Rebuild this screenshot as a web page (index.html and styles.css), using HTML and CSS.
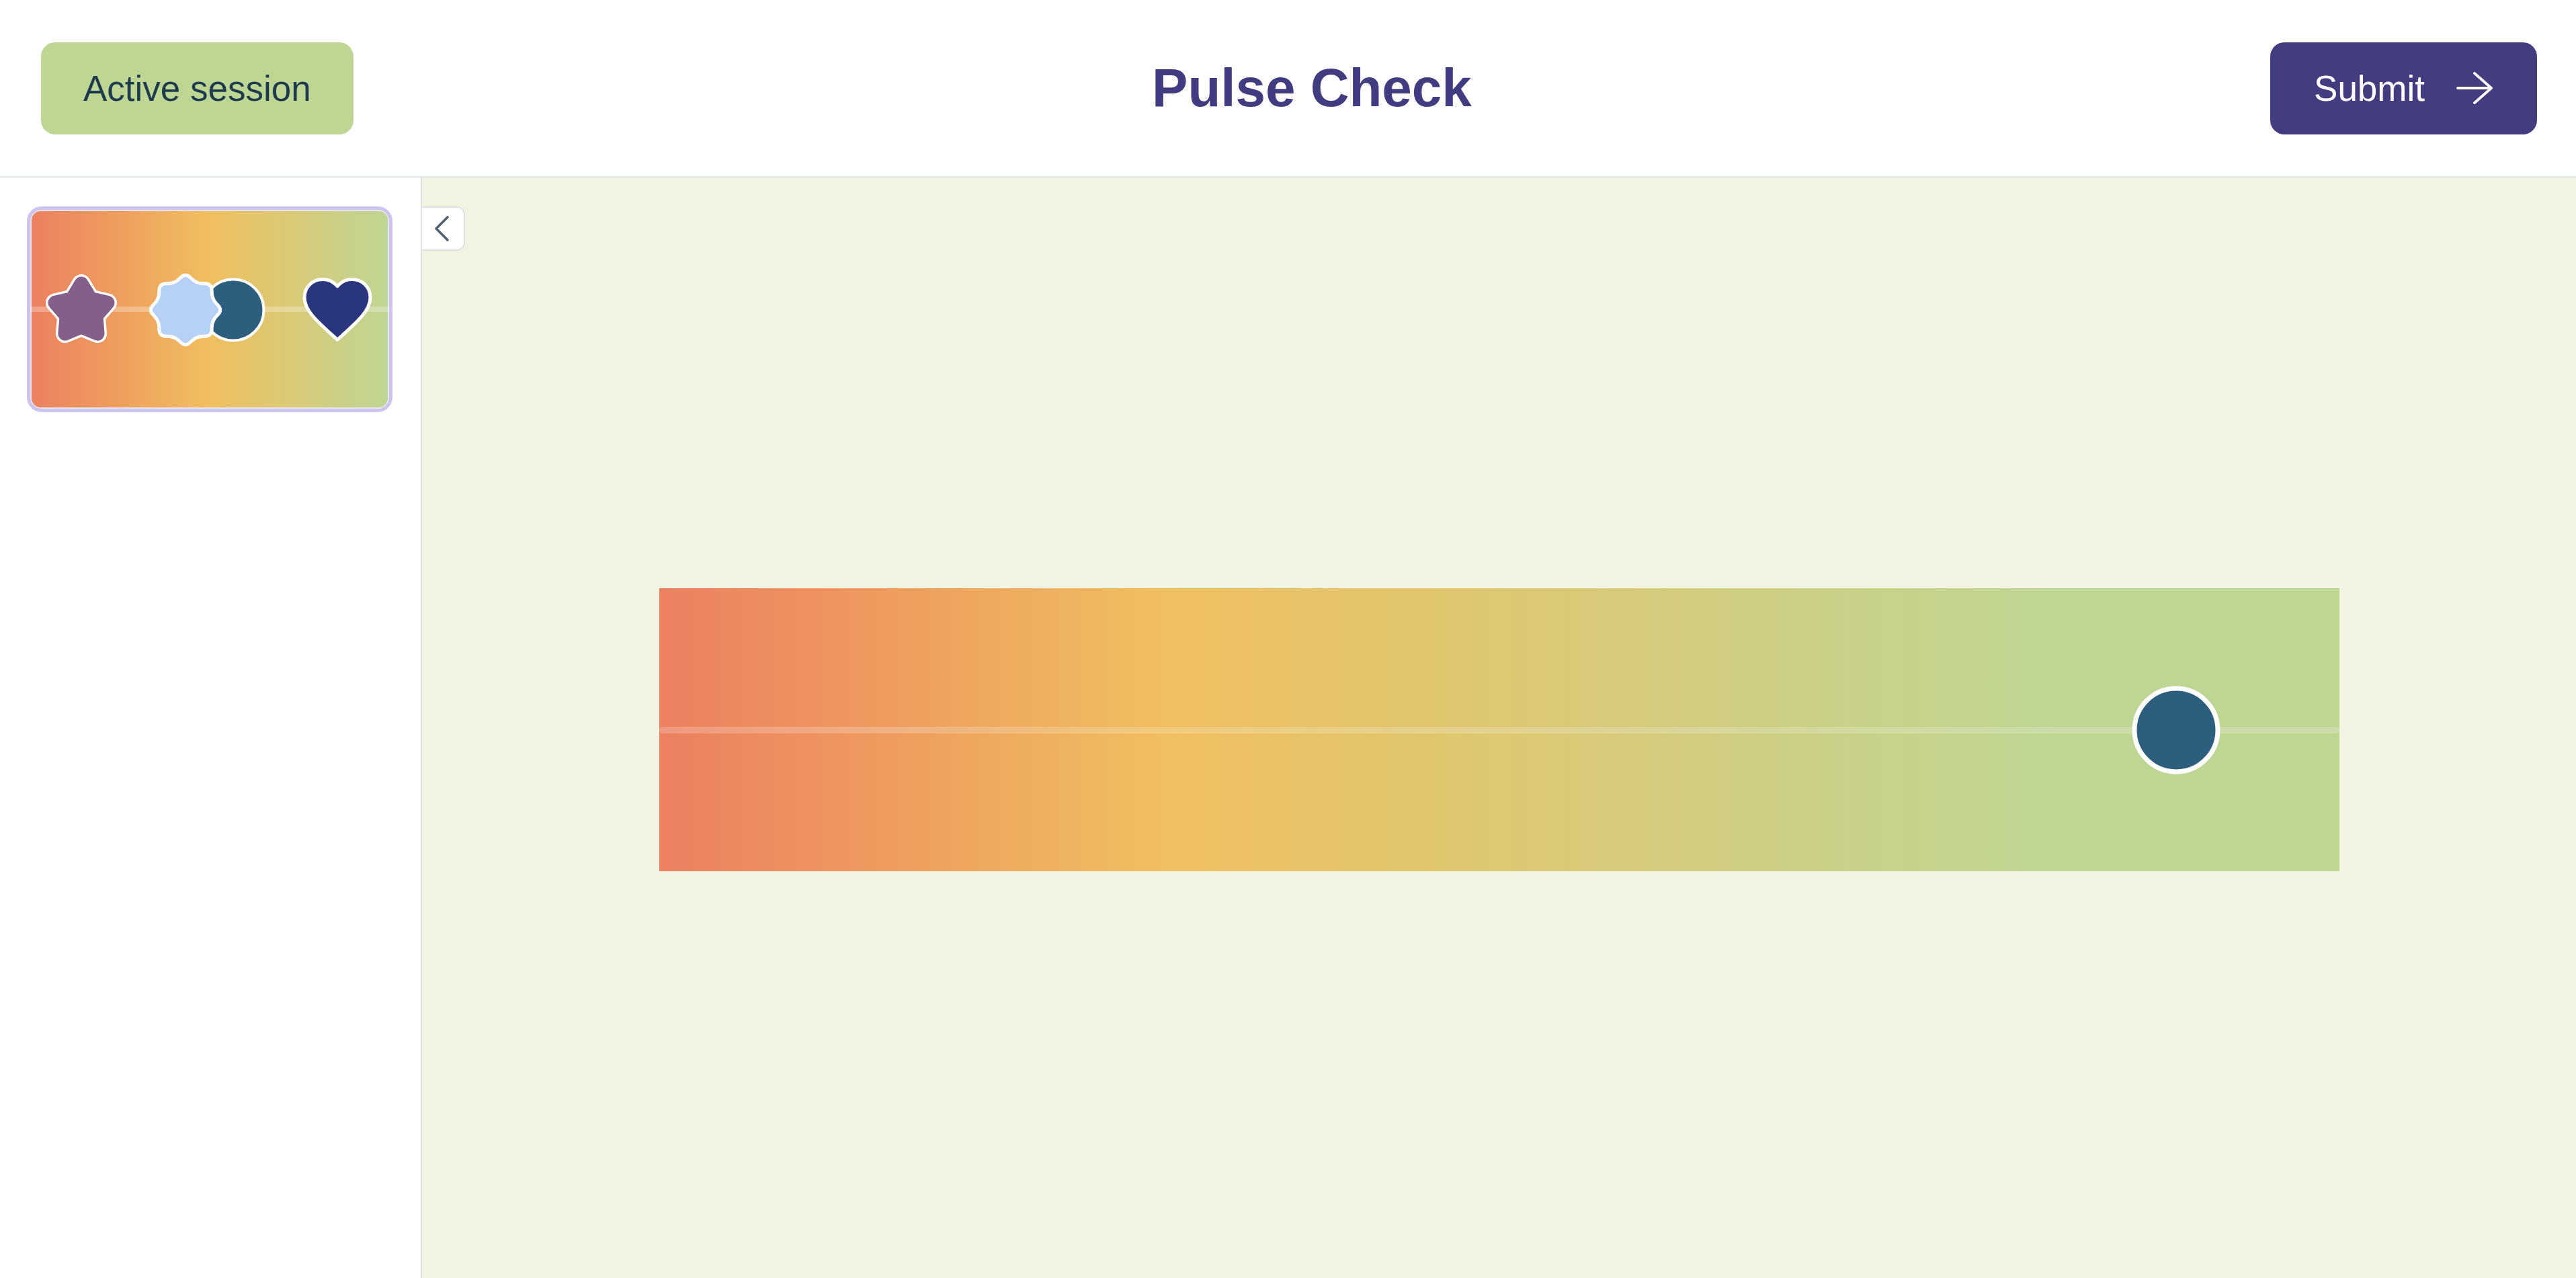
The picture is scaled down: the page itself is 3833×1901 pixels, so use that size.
FILE: index.html
```html
<!DOCTYPE html>
<html lang="en">
<head>
<meta charset="utf-8">
<title>Pulse Check</title>
<link rel="stylesheet" href="styles.css">
</head>
<body>
<header class="topbar">
  <button class="status-pill" type="button">Active session</button>
  <h1 class="title">Pulse Check</h1>
  <button class="submit-btn" type="button">
    <span>Submit</span>
    <svg class="submit-arrow" width="54" height="50" viewBox="0 0 54 50" aria-hidden="true">
      <path d="M2 25H52M27 3L52 25L27 47" fill="none" stroke="#fff" stroke-width="3.8" stroke-linecap="round" stroke-linejoin="round"/>
    </svg>
  </button>
</header>
<div class="workspace">
  <aside class="sidebar">
    <div class="slide-thumb">
      <div class="thumb-inner">
        <svg class="thumb-art" viewBox="0 0 534 296" width="534" height="296" aria-hidden="true">
          <rect x="0" y="144" width="534" height="8" fill="rgba(255,255,255,0.28)"/>
          <polygon points="76,110 89.52,132.39 114.99,138.33 97.87,158.11 100.1,184.17 76,174 51.9,184.17 54.13,158.11 37.01,138.33 62.48,132.39" fill="#fff" stroke="#fff" stroke-width="28" stroke-linejoin="round"/>
          <polygon points="76,110 89.52,132.39 114.99,138.33 97.87,158.11 100.1,184.17 76,174 51.9,184.17 54.13,158.11 37.01,138.33 62.48,132.39" fill="#82608a" stroke="#82608a" stroke-width="21" stroke-linejoin="round"/>
          <circle cx="302" cy="149" r="45.5" fill="#2d5e7e" stroke="#fff" stroke-width="4"/>
          <path transform="translate(231,149)" d="M47.4,-8.035 Q56,0 47.4,8.035 Q38.8,16.07 39.2,27.835 Q39.6,39.6 27.835,39.2 Q16.07,38.8 8.035,47.4 Q0,56 -8.035,47.4 Q-16.07,38.8 -27.835,39.2 Q-39.6,39.6 -39.2,27.835 Q-38.8,16.07 -47.4,8.035 Q-56,0 -47.4,-8.035 Q-38.8,-16.07 -39.2,-27.835 Q-39.6,-39.6 -27.835,-39.2 Q-16.07,-38.8 -8.035,-47.4 Q0,-56 8.035,-47.4 Q16.07,-38.8 27.835,-39.2 Q39.6,-39.6 39.2,-27.835 Q38.8,-16.07 47.4,-8.035 Z" fill="#b7d0f5" stroke="#fff" stroke-width="5"/>
          <path transform="translate(398.2,88.8) scale(4.9)" d="M12 21.35l-1.45-1.32C5.4 15.36 2 12.280 2 8.5 2 5.42 4.42 3 7.5 3c1.74 0 3.41.81 4.5 2.09C13.09 3.81 14.76 3 16.5 3 19.58 3 22 5.42 22 8.5c0 3.78-3.4 6.86-8.55 11.54L12 21.35z" fill="#29357c" stroke="#fff" stroke-width="5" vector-effect="non-scaling-stroke" stroke-linejoin="round"/>
        </svg>
      </div>
    </div>
  </aside>
  <main class="stage">
    <button class="collapse-btn" type="button" aria-label="Collapse sidebar">
      <svg width="25" height="40" viewBox="0 0 25 40" aria-hidden="true">
        <path d="M21 3L4 20L21 37" fill="none" stroke="#506270" stroke-width="3.6" stroke-linecap="round" stroke-linejoin="round"/>
      </svg>
    </button>
    <div class="canvas">
      <div class="track"></div>
      <div class="marker" style="left: 90.28%;"></div>
    </div>
  </main>
</div>
</body>
</html>
```

FILE: styles.css
```css
html, body {
  margin: 0;
  height: 100%;
}

body {
  font-family: "Liberation Sans", Arial, sans-serif;
  display: flex;
  flex-direction: column;
  height: 100vh;
  background: #fff;
}

.topbar {
  flex: none;
  height: 262px;
  display: flex;
  align-items: center;
  justify-content: space-between;
  padding: 0 58px 0 61px;
  border-bottom: 2px solid #dfe2e6;
  background: #fff;
}

.status-pill {
  height: 137px;
  padding: 0 63px;
  border: 0;
  border-radius: 21px;
  background: #bed694;
  color: #1f3a4c;
  font-family: "Liberation Sans", Arial, sans-serif;
  font-size: 53px;
  cursor: pointer;
}

.title {
  margin: 0;
  font-size: 80px;
  font-weight: 700;
  color: #413b80;
}

.submit-btn {
  height: 137px;
  padding: 0 66px 0 65px;
  display: flex;
  align-items: center;
  gap: 47px;
  border: 0;
  border-radius: 21px;
  background: #433d80;
  color: #fff;
  font-family: "Liberation Sans", Arial, sans-serif;
  font-size: 53px;
  cursor: pointer;
}

.submit-arrow {
  display: block;
}

.workspace {
  flex: 1;
  display: flex;
  min-height: 0;
}

.sidebar {
  flex: none;
  width: 628px;
  box-sizing: border-box;
  padding: 43px 42px 0 40px;
  border-right: 2px solid #dfe2e6;
  background: #fff;
}

.slide-thumb {
  height: 306px;
  box-sizing: border-box;
  border: 5px solid #cdc3ef;
  border-radius: 22px;
  overflow: hidden;
}

.thumb-inner {
  height: 100%;
  border-radius: 16px;
  overflow: hidden;
  background: linear-gradient(90deg, #ec7f5f 0%, #f0bf5f 50%, #bed694 100%);
  box-shadow: inset 0 0 0 2px #e6e4ec;
}

.thumb-art {
  display: block;
  width: 100%;
  height: 100%;
}

.stage {
  flex: 1;
  position: relative;
  display: flex;
  align-items: center;
  justify-content: center;
  background: #f2f4e1;
}

.collapse-btn {
  position: absolute;
  left: 0;
  top: 43px;
  width: 64px;
  height: 66px;
  box-sizing: border-box;
  padding: 0 4px 0 0;
  display: flex;
  align-items: center;
  justify-content: center;
  background: #fff;
  border: 2px solid #dfe2e6;
  border-left: 0;
  border-radius: 0 12px 12px 0;
  cursor: pointer;
}

.canvas {
  position: relative;
  width: 2500px;
  height: 421px;
  margin-top: 6px;
  background: linear-gradient(90deg, #ec7f5f 0%, #f0bf5f 30%, #bed694 83%, #bed694 100%);
}

.track {
  position: absolute;
  left: 0;
  right: 0;
  top: 50%;
  height: 10px;
  margin-top: -5px;
  border-radius: 5px;
  background: rgba(255, 255, 255, 0.2);
}

.marker {
  position: absolute;
  top: 50%;
  width: 131px;
  height: 131px;
  box-sizing: border-box;
  border: 7px solid #fff;
  border-radius: 50%;
  background: #2d5e7e;
  transform: translate(-50%, -50%);
}
```
